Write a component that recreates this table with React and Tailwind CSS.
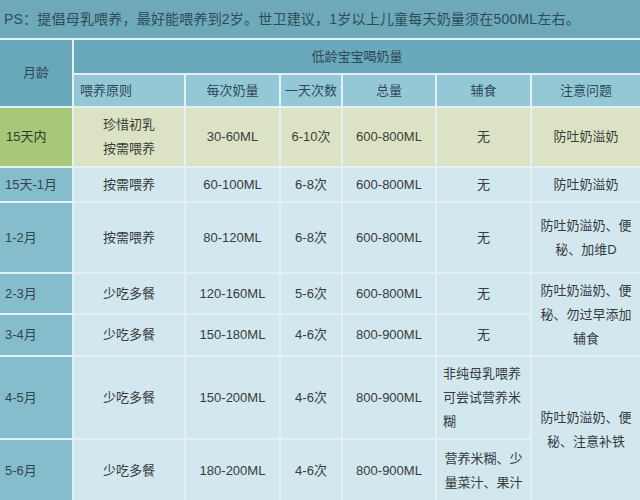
import React from "react";

const font = { fontFamily: '"Liberation Sans", "Noto Sans CJK SC", sans-serif' };

function Cell({ className = "", children, style }) {
  return (
    <div className={`flex items-center justify-center text-center leading-[24px] ${className}`} style={style}>
      {children}
    </div>
  );
}

const body = "bg-[#d3e7ee] text-[#353b3f]";
const first = "bg-[#86bdcd] text-[#2f4650] !justify-start pl-[5px]";
const green = "bg-[#dce3c5] text-[#3b3e36]";

export default function App() {
  return (
    <div className="w-[640px] h-[500px] overflow-hidden bg-[#e8f4f7]" style={font}>
      <div className="h-[38px] bg-[#6ea9ba] flex items-center pl-[4px] text-[14px] text-[#2c4c58] tracking-[0.2px]">
        PS：提倡母乳喂养，最好能喂养到2岁。世卫建议，1岁以上儿童每天奶量须在500ML左右。
      </div>
      <div
        className="grid gap-[2px] pt-[2px] text-[13px] bg-[#e3f1f5]"
        style={{
          gridTemplateColumns: "72px 110px 93px 60px 92px 93px 108px",
          gridTemplateRows: "33px 31px 58px 33px 69px 39px 40px 81px 62px",
        }}
      >
        <Cell className="row-span-2 bg-[#69a7ba] text-[#2c4a56]">月龄</Cell>
        <Cell className="col-span-6 bg-[#6aa9bc] text-[#2c4a56]">低龄宝宝喝奶量</Cell>
        <Cell className="bg-[#95c8d6] text-[#2c4a56] !justify-start pl-[6px]">喂养原则</Cell>
        <Cell className="bg-[#95c8d6] text-[#2c4a56]">每次奶量</Cell>
        <Cell className="bg-[#95c8d6] text-[#2c4a56]">一天次数</Cell>
        <Cell className="bg-[#95c8d6] text-[#2c4a56]">总量</Cell>
        <Cell className="bg-[#95c8d6] text-[#2c4a56]">辅食</Cell>
        <Cell className="bg-[#95c8d6] text-[#2c4a56]">注意问题</Cell>

        <Cell className="bg-[#a6c878] text-[#333a2c] !justify-start pl-[6px]">15天内</Cell>
        <Cell className={green}>珍惜初乳<br />按需喂养</Cell>
        <Cell className={green}>30-60ML</Cell>
        <Cell className={green}>6-10次</Cell>
        <Cell className={green}>600-800ML</Cell>
        <Cell className={green}>无</Cell>
        <Cell className={green}>防吐奶溢奶</Cell>

        <Cell className={first}>15天-1月</Cell>
        <Cell className={body}>按需喂养</Cell>
        <Cell className={body}>60-100ML</Cell>
        <Cell className={body}>6-8次</Cell>
        <Cell className={body}>600-800ML</Cell>
        <Cell className={body}>无</Cell>
        <Cell className={body}>防吐奶溢奶</Cell>

        <Cell className={first}>1-2月</Cell>
        <Cell className={body}>按需喂养</Cell>
        <Cell className={body}>80-120ML</Cell>
        <Cell className={body}>6-8次</Cell>
        <Cell className={body}>600-800ML</Cell>
        <Cell className={body}>无</Cell>
        <Cell className={body}>防吐奶溢奶、便<br />秘、加维D</Cell>

        <Cell className={first}>2-3月</Cell>
        <Cell className={body}>少吃多餐</Cell>
        <Cell className={body}>120-160ML</Cell>
        <Cell className={body}>5-6次</Cell>
        <Cell className={body}>600-800ML</Cell>
        <Cell className={body}>无</Cell>
        <Cell className={`row-span-2 ${body}`}>防吐奶溢奶、便<br />秘、勿过早添加<br />辅食</Cell>

        <Cell className={first}>3-4月</Cell>
        <Cell className={body}>少吃多餐</Cell>
        <Cell className={body}>150-180ML</Cell>
        <Cell className={body}>4-6次</Cell>
        <Cell className={body}>800-900ML</Cell>
        <Cell className={body}>无</Cell>

        <Cell className={first}>4-5月</Cell>
        <Cell className={body}>少吃多餐</Cell>
        <Cell className={body}>150-200ML</Cell>
        <Cell className={body}>4-6次</Cell>
        <Cell className={body}>800-900ML</Cell>
        <Cell className={`${body} !justify-start !text-left pl-[6px]`}>
          <div>非纯母乳喂养<br />可尝试营养米<br />糊</div>
        </Cell>
        <Cell className={`row-span-2 ${body}`}>防吐奶溢奶、便<br />秘、注意补铁</Cell>

        <Cell className={first}>5-6月</Cell>
        <Cell className={body}>少吃多餐</Cell>
        <Cell className={body}>180-200ML</Cell>
        <Cell className={body}>4-6次</Cell>
        <Cell className={body}>800-900ML</Cell>
        <Cell className={body}>营养米糊、少<br />量菜汁、果汁</Cell>
      </div>
    </div>
  );
}
